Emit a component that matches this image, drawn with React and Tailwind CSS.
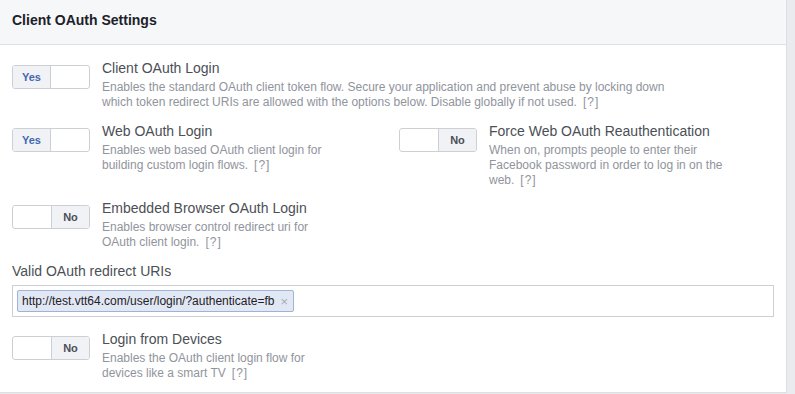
import React, { useState } from 'react';

const Toggle = ({ on }) => (
  <div className="flex w-[78px] h-[24px] shrink-0 rounded-[3px] border border-[#ccd0d5] bg-white overflow-hidden text-[11px] font-bold">
    {on ? (
      <>
        <div className="w-[38px] flex items-center justify-center bg-[#f1f2f5] border-r border-[#ccd0d5] text-[#4267b2]">Yes</div>
        <div className="flex-1" />
      </>
    ) : (
      <>
        <div className="flex-1" />
        <div className="w-[38px] flex items-center justify-center bg-[#f1f2f5] border-l border-[#ccd0d5] text-[#4b4f56]">No</div>
      </>
    )}
  </div>
);

const Help = () => <span className="ml-[6px] tracking-[1px]">[?]</span>;

const Setting = ({ on, title, lines }) => (
  <div className="flex gap-[12px] items-start">
    <Toggle on={on} />
    <div className="-mt-[6px]">
      <div className="text-[14px] leading-[18px] text-[#4b4f56]">{title}</div>
      <div className="mt-[3px] text-[12px] leading-[15px] text-[#90949c] whitespace-nowrap">
        {lines.map((l, i) => (
          <div key={i}>
            {l}
            {i === lines.length - 1 && <Help />}
          </div>
        ))}
      </div>
    </div>
  </div>
);

export default function App() {
  const [uris, setUris] = useState(['http://test.vtt64.com/user/login/?authenticate=fb']);

  return (
    <div className="w-[795px] h-[394px] overflow-hidden bg-[#e9ebee] font-['Liberation_Sans',Arial,sans-serif]">
      <div className="w-[787px] h-[393px] bg-white border-r border-b border-[#dddfe2]">
        <div className="h-[45px] bg-[#f6f7f9] border-b border-[#dddfe2] px-[12px] flex items-center">
          <h2 className="text-[14px] font-bold text-[#1d2129] -mt-[3px]">Client OAuth Settings</h2>
        </div>

        <div className="px-[12px] pt-[20px]">
          <Setting
            on
            title="Client OAuth Login"
            lines={[
              'Enables the standard OAuth client token flow. Secure your application and prevent abuse by locking down',
              'which token redirect URIs are allowed with the options below. Disable globally if not used.',
            ]}
          />

          <div className="grid grid-cols-2 gap-[12px] mt-[18px]">
            <Setting
              on
              title="Web OAuth Login"
              lines={['Enables web based OAuth client login for', 'building custom login flows.']}
            />
            <Setting
              title="Force Web OAuth Reauthentication"
              lines={[
                'When on, prompts people to enter their',
                'Facebook password in order to log in on the',
                'web.',
              ]}
            />
          </div>

          <div className="mt-[17px]">
            <Setting
              title="Embedded Browser OAuth Login"
              lines={['Enables browser control redirect uri for', 'OAuth client login.']}
            />
          </div>

          <div className="mt-[12px] text-[14px] leading-[18px] text-[#4b4f56]">Valid OAuth redirect URIs</div>
          <div className="mt-[5px] w-[762px] h-[32px] border border-[#ccd0d5] px-[4px] flex items-center gap-[4px]">
            {uris.map((u) => (
              <span
                key={u}
                className="h-[22px] flex items-center gap-[6px] pl-[4px] pr-[5px] rounded-[2px] border border-[#9cb4d8] bg-[#e2e8f3] text-[12px] text-[#1d2129]"
              >
                {u}
                <button
                  className="text-[#a8abb3] text-[13px] leading-none"
                  onClick={() => setUris(uris.filter((x) => x !== u))}
                >
                  ×
                </button>
              </span>
            ))}
          </div>

          <div className="mt-[19px]">
            <Setting
              title="Login from Devices"
              lines={['Enables the OAuth client login flow for', 'devices like a smart TV']}
            />
          </div>
        </div>
      </div>
    </div>
  );
}
